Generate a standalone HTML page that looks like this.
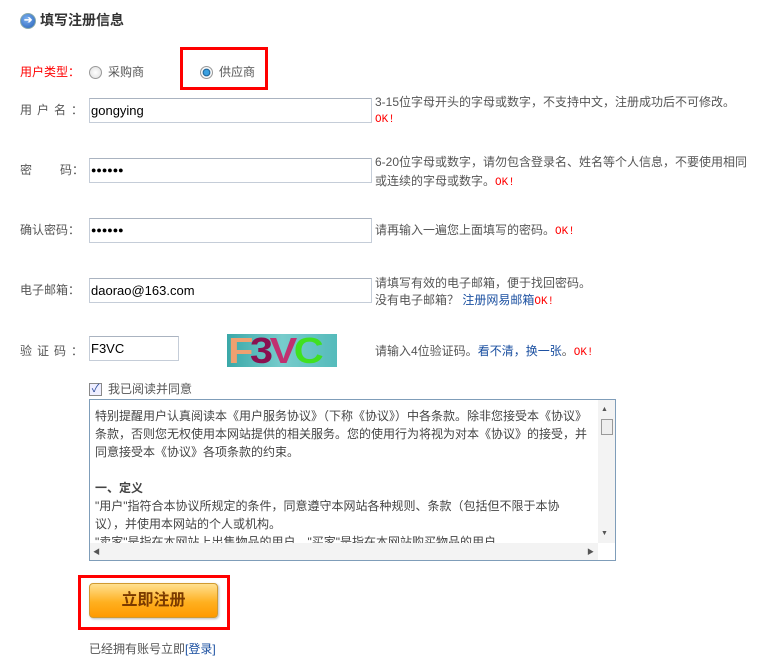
<!DOCTYPE html>
<html><head><meta charset="utf-8"><style>
body{margin:0;width:757px;height:672px;background:#fff;position:relative;font-family:"Liberation Sans","Noto Sans CJK SC",sans-serif;font-size:12px;color:#555;overflow:hidden}
.a{position:absolute;white-space:nowrap;line-height:14px}
.inp{position:absolute;border:1px solid #c5cdd8;border-top-color:#aab3c0;background:#fff;box-sizing:border-box;height:25px;font-size:13px;color:#000;padding:4px 0 0 1px}
.red{color:#f00}
.ok{color:#f00;font-family:"Liberation Mono",monospace;font-size:11px}
.radio{position:absolute;width:11px;height:11px;border-radius:50%;border:1px solid #999;background:radial-gradient(#fff,#ddd)}
.blue{color:#1a4fa0}
</style></head><body>
<div style="position:absolute;left:20px;top:13px;width:14px;height:14px;border-radius:50%;background:radial-gradient(circle at 40% 35%,#7ab0ef,#2660b8);border:1px solid #8aa;"><div style="position:absolute;left:3px;top:3px;color:#fff;font-size:10px;line-height:8px;font-weight:bold">➔</div></div>
<div class="a" style="left:40px;top:13px;font-size:14px;font-weight:bold;color:#333">填写注册信息</div>

<div class="a red" style="left:20px;top:65px">用户类型：</div>
<div class="radio" style="left:89px;top:66px"></div>
<div class="a" style="left:108px;top:65px">采购商</div>
<div style="position:absolute;left:180px;top:47px;width:82px;height:37px;border:3px solid #f00"></div>
<div class="radio" style="left:200px;top:66px;background:radial-gradient(#3ba0e0 30%,#16588a 45%,#fff 55%,#ddd)"></div>
<div class="a" style="left:219px;top:65px">供应商</div>

<div class="a" style="left:20px;top:103px;letter-spacing:5px">用户名：</div>
<div class="inp" style="left:89px;top:98px;width:283px">gongying</div>
<div class="a" style="left:375px;top:95px">3-15位字母开头的字母或数字，不支持中文，注册成功后不可修改。</div>
<div class="a ok" style="left:375px;top:113px">OK!</div>

<div class="a" style="left:20px;top:163px">密<span style="display:inline-block;width:28px"></span>码：</div>
<div class="inp" style="left:89px;top:158px;width:283px;font-size:9px;padding-top:6px">●●●●●●</div>
<div class="a" style="left:375px;top:155px">6-20位字母或数字，请勿包含登录名、姓名等个人信息，不要使用相同</div>
<div class="a" style="left:375px;top:174px">或连续的字母或数字。<span class="ok">OK!</span></div>

<div class="a" style="left:20px;top:223px">确认密码：</div>
<div class="inp" style="left:89px;top:218px;width:283px;font-size:9px;padding-top:6px">●●●●●●</div>
<div class="a" style="left:375px;top:223px">请再输入一遍您上面填写的密码。<span class="ok">OK!</span></div>

<div class="a" style="left:20px;top:283px">电子邮箱：</div>
<div class="inp" style="left:89px;top:278px;width:283px">daorao@163.com</div>
<div class="a" style="left:375px;top:276px">请填写有效的电子邮箱，便于找回密码。</div>
<div class="a" style="left:375px;top:293px">没有电子邮箱？ <span class="blue">注册网易邮箱</span><span class="ok">OK!</span></div>

<div class="a" style="left:20px;top:344px;letter-spacing:5px">验证码：</div>
<div class="inp" style="left:89px;top:336px;width:90px">F3VC</div>
<div style="position:absolute;left:227px;top:334px;width:110px;height:33px;background:linear-gradient(90deg,#3aa8a8,#7cc 50%,#5bb);overflow:hidden;font-family:'Liberation Sans',sans-serif;font-weight:900;font-size:36px;line-height:33px">
<div style="transform:scaleX(1.15);transform-origin:0 0;letter-spacing:-3px;padding-left:1px"><span style="color:#f0a070">F</span><span style="color:#8a1050">3</span><span style="color:#c03070">V</span><span style="color:#40e020">C</span></div></div>
<div class="a" style="left:375px;top:344px">请输入4位验证码。<span class="blue">看不清，换一张</span>。<span class="ok">OK!</span></div>

<div style="position:absolute;left:89px;top:383px;width:11px;height:11px;border:1px solid #888;background:#eef;color:#2a4a9a;font-size:11px;line-height:11px;text-align:center">✓</div>
<div class="a" style="left:108px;top:382px">我已阅读并同意</div>

<div style="position:absolute;left:89px;top:399px;width:525px;height:160px;border:1px solid #7f9db9;overflow:hidden">
<div style="position:absolute;left:5px;top:7px;line-height:18px;color:#444;white-space:nowrap">
特别提醒用户认真阅读本《用户服务协议》（下称《协议》）中各条款。除非您接受本《协议》<br>
条款，否则您无权使用本网站提供的相关服务。您的使用行为将视为对本《协议》的接受，并<br>
同意接受本《协议》各项条款的约束。<br><br>
<b>一、定义</b><br>
"用户"指符合本协议所规定的条件，同意遵守本网站各种规则、条款（包括但不限于本协<br>
议），并使用本网站的个人或机构。<br>
"卖家"是指在本网站上出售物品的用户。"买家"是指在本网站购买物品的用户。
</div>
<div style="position:absolute;left:508px;top:0;width:17px;height:143px;background:#f3f3f3"></div>
<div style="position:absolute;left:511px;top:19px;width:10px;height:14px;border:1px solid #999;background:#eee"></div>
<div style="position:absolute;left:0;top:143px;width:508px;height:17px;background:#f3f3f3"></div>
<div style="position:absolute;left:508px;top:143px;width:17px;height:17px;background:#fff"></div>
<div class="a" style="left:511px;top:3px;font-size:7px;color:#555">▲</div>
<div class="a" style="left:511px;top:127px;font-size:7px;color:#555">▼</div>
<div class="a" style="left:3px;top:146px;font-size:7px;color:#555">◀</div>
<div class="a" style="left:497px;top:146px;font-size:7px;color:#555">▶</div>
</div>

<div style="position:absolute;left:78px;top:575px;width:146px;height:49px;border:3px solid #f00"></div>
<div style="position:absolute;left:89px;top:583px;width:127px;height:33px;border:1px solid #d09a30;border-radius:4px;background:linear-gradient(#ffe090,#ffb020 55%,#ff9a00);box-shadow:1px 1px 2px #bbb;text-align:center;line-height:33px;font-size:16px;font-weight:bold;color:#7a3a00">立即注册</div>

<div class="a" style="left:89px;top:642px">已经拥有账号立即<span class="blue">[登录]</span></div>
</body></html>
